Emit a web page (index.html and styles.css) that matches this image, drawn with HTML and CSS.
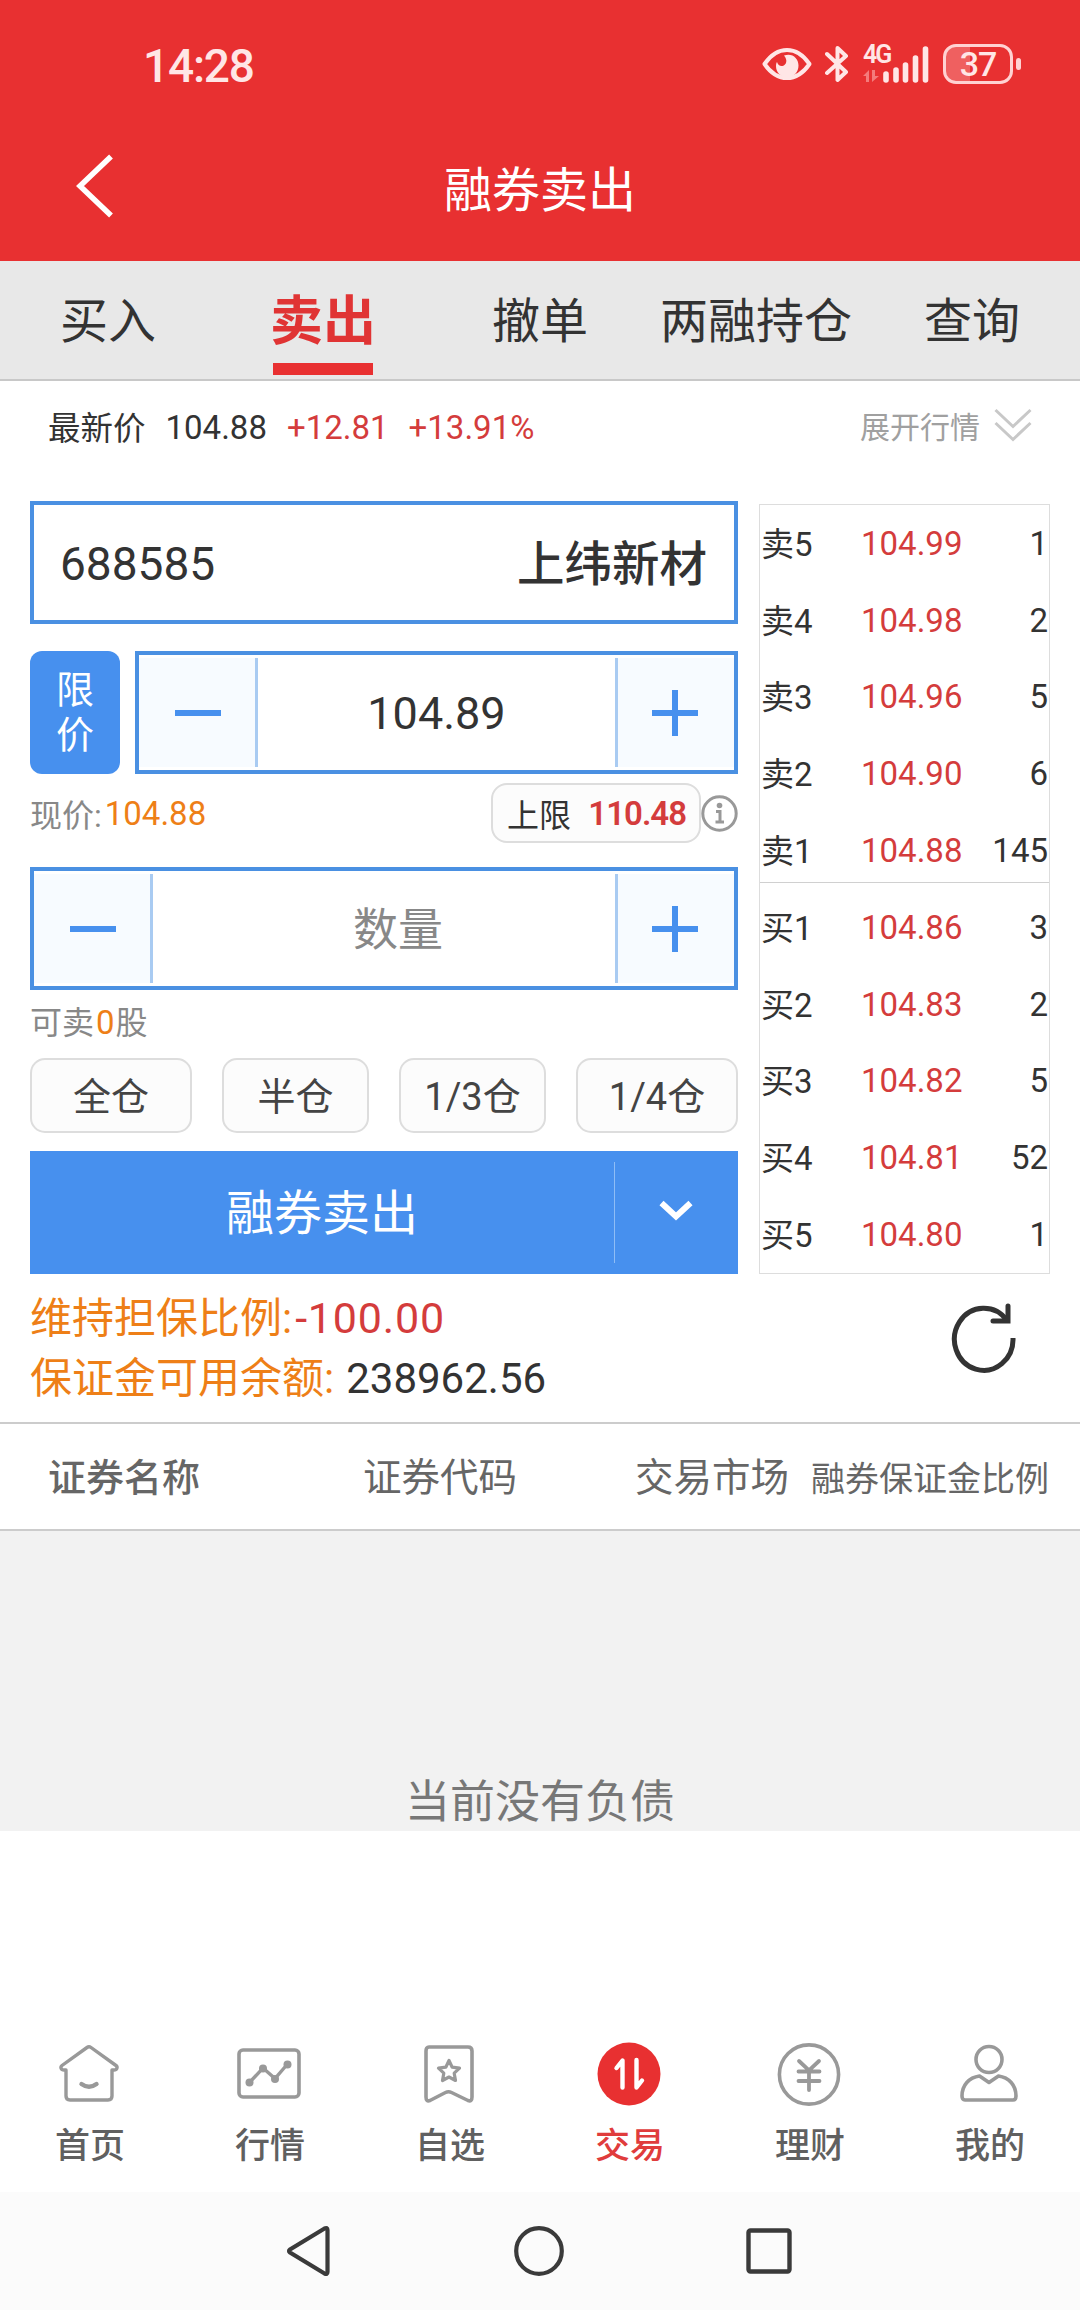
FILE: index.html
```html
<!DOCTYPE html>
<html lang="zh-CN">
<head>
  <meta charset="UTF-8">
  <title>融券卖出</title>
  <meta name="viewport" content="width=device-width, initial-scale=1.0">
  <link rel="stylesheet" href="styles.css">
</head>
<body>
  <div class="app">
    <!-- Status bar + title -->
    <header class="header">
      <div class="status-bar">
        <span class="status-time">14:28</span>
        <div class="status-icons">
          <svg class="icon-eye" width="50" height="34" viewBox="0 0 50 34">
            <path d="M2.500 17C9 7.500 16 3 25 3s16 4.500 22.500 14C41 26.500 34 31 25 31S9 26.500 2.500 17z" fill="none" stroke="#ffe6e6" stroke-width="4" stroke-linejoin="round"/>
            <path d="M22 8.500c8-3 14.500 2.500 14.500 10 0 7-5 11.500-11.500 11.500-7 0-11-5-11-11 0-1.500.3-3 1-4 1 3 3 4.500 5.500 4 4-1 5.500-6 1.500-10.500z" fill="#ffe6e6"/>
          </svg>
          <svg class="icon-bt" width="24" height="38" viewBox="0 0 24 38">
            <path d="M2 9l19 18-8.500 8V3L21 11 2 28" fill="none" stroke="#ffe6e6" stroke-width="4" stroke-linejoin="round" stroke-linecap="round"/>
          </svg>
          <div class="signal">
            <span class="signal-type">4G</span>
            <svg width="68" height="38" viewBox="0 0 68 38">
              <path d="M0 31l6-6v12H3v-6zM9 25h3v6h4l-7 6z" fill="#f47b7b"/>
              <path d="M23 29v6M33 25v10M42.500 20v15M52.500 13v22M62.500 4v31" stroke="#ffe6e6" stroke-width="5.600" stroke-linecap="round"/>
            </svg>
          </div>
          <div class="battery"><span>37</span></div>
        </div>
      </div>
      <div class="title-bar">
        <svg class="back" width="38" height="66" viewBox="0 0 38 66">
          <path d="M35 2.500L4 32l31 29.500" fill="none" stroke="#fff" stroke-width="5.500"/>
        </svg>
        <h1>融券卖出</h1>
      </div>
    </header>

    <nav class="tabs">
      <a class="tab">买入</a>
      <a class="tab active">卖出</a>
      <a class="tab">撤单</a>
      <a class="tab">两融持仓</a>
      <a class="tab">查询</a>
    </nav>

    <div class="quote">
      <span class="quote-label">最新价</span>
      <span class="num">104.88</span>
      <span class="num red">+12.81</span>
      <span class="num red">+13.91%</span>
      <span class="expand">展开行情
        <svg width="38" height="34" viewBox="0 0 38 34">
          <path d="M1.500 2L19 18.500 36.500 2M1.500 15L19 31.500 36.500 15" fill="none" stroke="#c8c8c8" stroke-width="3"/>
        </svg>
      </span>
    </div>

    <!-- Order form on the left, five level book on the right -->
    <div class="trade">
      <div class="form">
        <div class="stock-box">
          <span class="stock-code">688585</span>
          <span class="stock-name">上纬新材</span>
        </div>

        <div class="price-row">
          <button class="price-type">限<br>价</button>
          <div class="stepper">
            <button class="step minus"></button>
            <div class="step-value num">104.89</div>
            <button class="step plus"></button>
          </div>
        </div>

        <div class="price-hint">
          <span class="grey">现价:</span><span class="num orange">104.88</span>
          <div class="limit">上限 <b class="num">110.48</b></div>
          <svg width="37" height="37" viewBox="0 0 37 37">
            <circle cx="18.500" cy="18.500" r="16.700" fill="none" stroke="#999" stroke-width="3"/>
            <circle cx="18.500" cy="10.500" r="2.800" fill="#999"/>
            <path d="M15 16.500h4v10M14.500 27h8.500" fill="none" stroke="#999" stroke-width="3"/>
          </svg>
        </div>

        <div class="stepper">
          <button class="step minus"></button>
          <div class="step-value placeholder">数量</div>
          <button class="step plus"></button>
        </div>

        <div class="avail">可卖<span class="orange num">0</span>股</div>

        <div class="portions">
          <button class="wide">全仓</button>
          <button>半仓</button>
          <button>1/3仓</button>
          <button class="wide">1/4仓</button>
        </div>

        <div class="submit">
          <button class="submit-main">融券卖出</button>
          <button class="submit-more">
            <svg width="36" height="22" viewBox="0 0 36 22">
              <path d="M3.500 3L18 16.500 32.500 3" fill="none" stroke="#fff" stroke-width="6"/>
            </svg>
          </button>
        </div>
      </div>

      <div class="book">
        <div class="book-side sell">
          <div class="level"><span>卖5</span><span class="red">104.99</span><span>1</span></div>
          <div class="level"><span>卖4</span><span class="red">104.98</span><span>2</span></div>
          <div class="level"><span>卖3</span><span class="red">104.96</span><span>5</span></div>
          <div class="level"><span>卖2</span><span class="red">104.90</span><span>6</span></div>
          <div class="level"><span>卖1</span><span class="red">104.88</span><span>145</span></div>
        </div>
        <div class="book-side">
          <div class="level"><span>买1</span><span class="red">104.86</span><span>3</span></div>
          <div class="level"><span>买2</span><span class="red">104.83</span><span>2</span></div>
          <div class="level"><span>买3</span><span class="red">104.82</span><span>5</span></div>
          <div class="level"><span>买4</span><span class="red">104.81</span><span>52</span></div>
          <div class="level"><span>买5</span><span class="red">104.80</span><span>1</span></div>
        </div>
      </div>
    </div>

    <div class="margin-info">
      <div>
        <p><span class="orange">维持担保比例:</span><span class="num ratio red">-100.00</span></p>
        <p><span class="orange">保证金可用余额:</span><span class="num balance">238962.56</span></p>
      </div>
      <svg class="refresh" width="66" height="70" viewBox="0 0 66 70">
        <path d="M56 17.500A29.300 31 0 1 0 62 35" fill="none" stroke="#333" stroke-width="5"/>
        <path d="M57 3v15H42" fill="none" stroke="#333" stroke-width="5" stroke-linecap="round"/>
      </svg>
    </div>

    <div class="list-head">
      <span class="medium">证券名称</span>
      <span>证券代码</span>
      <span>交易市场</span>
      <span class="small">融券保证金比例</span>
    </div>
    <div class="empty">当前没有负债</div>

    <!-- Bottom tab bar -->
    <nav class="bottom-nav">
      <a>
        <svg width="64" height="64" viewBox="0 0 64 64">
          <path d="M9 28H7c-3 0-4-3-2-4.500L30 5.500q2-1.500 4 0l25 18c2 1.500 1 4.500-2 4.500h-2v26q0 4-4 4H13q-4 0-4-4z" fill="none" stroke="#999" stroke-width="3.400" stroke-linejoin="round"/>
          <path d="M24.500 42q7.500 5.500 15 0" fill="none" stroke="#999" stroke-width="4.400" stroke-linecap="round"/>
        </svg>
        首页
      </a>
      <a>
        <svg width="64" height="64" viewBox="0 0 64 64">
          <rect x="2" y="8" width="60" height="47" rx="4" fill="none" stroke="#999" stroke-width="3.600"/>
          <path d="M12.500 40.500L26 26l12 10.500L50.500 22" fill="none" stroke="#999" stroke-width="3.400"/>
          <circle cx="12.500" cy="40.500" r="4" fill="#999"/><circle cx="26" cy="26.500" r="4" fill="#999"/>
          <circle cx="38" cy="37" r="4" fill="#999"/><circle cx="50.500" cy="22.500" r="4" fill="#999"/>
        </svg>
        行情
      </a>
      <a>
        <svg width="64" height="64" viewBox="0 0 64 64">
          <path d="M12 5h39q4 0 4 4v46q0 5-4 3.500L34.500 50.500q-3-1.500-6 0L13 58.500Q9 60 9 55V9q0-4 3-4z" fill="none" stroke="#999" stroke-width="3.600" stroke-linejoin="round"/>
          <path d="M32 18.500l3.200 6.700 7.300 1-5.300 5 1.300 7.300L32 35l-6.500 3.500 1.300-7.300-5.300-5 7.300-1z" fill="none" stroke="#999" stroke-width="3.200" stroke-linejoin="round"/>
        </svg>
        自选
      </a>
      <a class="active">
        <svg width="64" height="64" viewBox="0 0 64 64">
          <circle cx="32" cy="32" r="31.500" fill="#e83031"/>
          <path d="M19.500 26l6-7.500v27M39.500 18v27.500l5.500-7" fill="none" stroke="#fff" stroke-width="4.400" stroke-linejoin="round" stroke-linecap="round"/>
        </svg>
        交易
      </a>
      <a>
        <svg width="64" height="64" viewBox="0 0 64 64">
          <circle cx="32" cy="32.500" r="29.600" fill="none" stroke="#999" stroke-width="3.600"/>
          <path d="M22 19l10 9.500L42 19M21.500 29.500h21M21.500 39h21M32 29v19" fill="none" stroke="#999" stroke-width="3.800" stroke-linecap="round"/>
        </svg>
        理财
      </a>
      <a>
        <svg width="64" height="64" viewBox="0 0 64 64">
          <circle cx="32" cy="17.500" r="13" fill="none" stroke="#999" stroke-width="3.600"/>
          <path d="M22.500 34l9.500 6.500 9.500-6.500C52 35.500 59 43 59 54q0 4-3 4H8q-3 0-3-4c0-11 7-18.500 17.500-20z" fill="none" stroke="#999" stroke-width="3.600" stroke-linejoin="round"/>
        </svg>
        我的
      </a>
    </nav>

    <footer class="sys-nav">
      <svg width="46" height="52" viewBox="0 0 46 52">
        <path d="M4 24.500q-2 1.500 0 3L38.500 48.500q3 1.500 3-1.500V5q0-3-3-1.500z" fill="none" stroke="#3a3a3a" stroke-width="4.200"/>
      </svg>
      <svg width="50" height="50" viewBox="0 0 50 50">
        <circle cx="25" cy="25" r="22.800" fill="none" stroke="#3a3a3a" stroke-width="4.200"/>
      </svg>
      <svg width="46" height="46" viewBox="0 0 46 46">
        <rect x="2.500" y="2.500" width="41" height="41" rx="2" fill="none" stroke="#3a3a3a" stroke-width="4.400"/>
      </svg>
    </footer>
  </div>
</body>
</html>
```
FILE: styles.css
```css
* {
  box-sizing: border-box;
}
body {
  margin: 0;
  background: #fff;
  color: #333;
  font-family: Roboto, 'Noto Sans CJK SC', sans-serif;
  font-size: 32px;
}
button {
  margin: 0;
  padding: 0;
  border: none;
  font-family: inherit;
  color: inherit;
}
svg {
  display: block;
  flex: none;
}
.app {
  width: 1080px;
  height: 2310px;
  display: flex;
  flex-direction: column;
  overflow: hidden;
}
.red {
  color: #d43c3c;
}
.orange {
  color: #ee7f17;
}
.grey {
  color: #888;
}

/* Header */
.header {
  height: 261px;
  background: #e83031;
  color: #fff;
}
.status-bar {
  height: 128px;
  padding: 0 59px 0 143px;
  display: flex;
  align-items: center;
  justify-content: space-between;
}
.status-time {
  color: #ffe6e6;
  font-size: 46px;
  font-weight: 500;
  letter-spacing: -1.2px;
  padding-top: 4px;
}
.status-icons {
  display: flex;
  align-items: center;
}
.icon-bt {
  margin-left: 13px;
}
.signal {
  position: relative;
  margin-left: 14px;
}
.signal-type {
  position: absolute;
  top: -2px;
  left: 0;
  color: #ffe6e6;
  font-size: 25px;
  line-height: 24px;
  font-weight: 600;
  letter-spacing: -2px;
}
.battery {
  position: relative;
  width: 70px;
  height: 40px;
  margin-left: 12px;
  margin-right: 8px;
  border: 3px solid #ffd2d2;
  border-radius: 13px;
  background: linear-gradient(90deg, #ef6060 38%, transparent 38%);
  color: #ffe6e6;
  font-size: 34px;
  line-height: 35px;
  font-weight: 500;
  text-align: center;
  letter-spacing: -1px;
}
.battery::after {
  content: "";
  position: absolute;
  top: 11px;
  right: -11px;
  width: 5px;
  height: 12px;
  border-radius: 3px;
  background: #ffd2d2;
}
.title-bar {
  display: flex;
  align-items: center;
  height: 118px;
  padding-left: 76px;
}
.title-bar h1 {
  flex: 1;
  margin: 7px 114px 0 0;
  font-size: 48px;
  line-height: 60px;
  font-weight: 400;
  text-align: center;
}

/* Tabs */
.tabs {
  display: flex;
  height: 120px;
  background: #e8e8e8;
  border-bottom: 2px solid #c8c8c8;
}
.tab {
  flex: 1;
  height: 114px;
  font-size: 48px;
  line-height: 122px;
  text-align: center;
  white-space: nowrap;
}
.tab.active {
  display: flex;
  justify-content: center;
  flex: none;
  width: 100px;
  margin: 0 59px 0 57px;
  font-size: 53px;
  font-weight: 700;
  color: #e03434;
  border-bottom: 12px solid #e83031;
}

.quote {
  display: flex;
  align-items: center;
  height: 93px;
  padding: 0 48px;
  font-size: 32.5px;
}
.quote-label {
  padding-bottom: 4px;
}
.quote .num {
  font-size: 33px;
  margin-left: 20px;
}
.expand {
  display: flex;
  align-items: center;
  gap: 14px;
  margin-left: auto;
  padding-bottom: 6px;
  font-size: 30px;
  color: #a0a0a0;
}

/* Order form */
.trade {
  display: flex;
  gap: 21px;
  padding: 27px 30px 0;
}
.form {
  width: 708px;
}
.stock-box {
  display: flex;
  align-items: center;
  justify-content: space-between;
  height: 123px;
  padding: 0 27px 0 26px;
  border: 4px solid #4a90e2;
}
.stock-code {
  padding-top: 3px;
  font-size: 46px;
}
.stock-name {
  padding-bottom: 5px;
  font-size: 47.5px;
  font-weight: 500;
}
.price-row {
  display: flex;
  gap: 15px;
  margin-top: 27px;
}
.price-type {
  width: 90px;
  height: 123px;
  border-radius: 12px;
  background: #4790ee;
  color: #fff;
  font-size: 38px;
  line-height: 45px;
}
.stepper {
  display: flex;
  flex: 1;
  height: 123px;
  padding: 3px 0;
  border: 4px solid #4a90e2;
}
.step {
  position: relative;
  width: 119px;
  background: #f7fbff;
}
.step.minus {
  border-right: 3px solid #a9cbf2;
}
.step.plus {
  border-left: 3px solid #a9cbf2;
}
.step::before,
.step.plus::after {
  content: "";
  position: absolute;
  left: 50%;
  top: 50%;
  width: 46px;
  height: 6px;
  margin: -3px 0 0 -22px;
  background: #4790ee;
}
.step.plus::before {
  margin-left: -24px;
}
.step.plus::after {
  width: 6px;
  height: 46px;
  margin: -23px 0 0 -4px;
}
.step-value {
  flex: 1;
  font-size: 45px;
  line-height: 112px;
  text-align: center;
}
.placeholder {
  color: #888;
  padding-left: 28px;
  line-height: 114px;
}
.price-hint {
  display: flex;
  align-items: center;
  height: 93px;
  padding-bottom: 15px;
}
.price-hint .num,
.avail .num {
  font-size: 33px;
}
.price-hint .orange {
  margin-left: 3px;
}
.limit {
  display: flex;
  align-items: center;
  justify-content: space-between;
  width: 210px;
  height: 60px;
  margin-left: auto;
  padding: 0 13px 0 14px;
  border: 2px solid #ddd;
  border-radius: 16px;
  background: #fcfcfc;
}
.limit .num {
  font-weight: 600;
  letter-spacing: -1px;
  color: #d43c3c;
}
.avail {
  height: 68px;
  line-height: 65px;
  color: #888;
}
.avail .num {
  margin: 0 1px 0 2px;
  color: #ee7f17;
}
.portions {
  display: flex;
  justify-content: space-between;
}
.portions button {
  width: 147px;
  height: 75px;
  padding-bottom: 4px;
  border: 2px solid #ddd;
  border-radius: 15px;
  background: #fcfcfc;
  color: #444;
  font-size: 38px;
}
.portions .wide {
  width: 162px;
}
.submit {
  display: flex;
  align-items: center;
  height: 123px;
  margin-top: 18px;
  background: #4790ee;
  color: #fff;
}
.submit button {
  height: 101px;
  background: none;
}
.submit .submit-main {
  flex: 1;
  padding-bottom: 7px;
  font-size: 48px;
}
.submit .submit-more {
  display: flex;
  align-items: center;
  justify-content: center;
  width: 124px;
  padding: 0 2px 3px 0;
  border-left: 1px solid #8fbdf6;
}

/* Five level book */
.book {
  width: 291px;
  height: 770px;
  margin-top: 3px;
  border: 1px solid #ddd;
  display: flex;
  flex-direction: column;
}
.book-side {
  position: relative;
  flex: 1;
  display: flex;
  flex-direction: column;
}
.sell::after {
  content: "";
  position: absolute;
  left: 0;
  right: 0;
  bottom: 6px;
  border-bottom: 1px solid #d0d0d0;
}
.level {
  flex: 1;
  display: grid;
  grid-template-columns: 100px 110px 1fr;
  align-items: center;
  padding: 0 1px;
  font-size: 33px;
}
.level span:first-child {
  padding-bottom: 3px;
}
.level span:last-child {
  text-align: right;
}

.margin-info {
  display: flex;
  justify-content: space-between;
  height: 150px;
  padding: 14px 63px 0 30px;
  border-bottom: 2px solid #ccc;
}
.margin-info p {
  margin: 0;
  font-size: 42px;
  line-height: 60px;
}
.margin-info .ratio {
  margin-left: 3px;
  font-size: 43px;
  letter-spacing: .8px;
}
.margin-info .balance {
  margin-left: 12px;
}
.refresh {
  margin-top: 15px;
}

/* Holdings */
.list-head {
  display: grid;
  grid-template-columns: 315px 272px 176px 1fr;
  align-items: center;
  height: 107px;
  padding: 0 0 5px 48px;
  border-bottom: 2px solid #ccc;
  color: #666;
  font-size: 38.500px;
  white-space: nowrap;
}
.list-head .medium {
  font-weight: 500;
  font-size: 38px;
}
.list-head .small {
  padding-top: 4px;
  font-size: 34px;
}
.empty {
  height: 300px;
  padding-top: 242px;
  background: #f2f2f2;
  color: #777;
  font-size: 45px;
  line-height: 60px;
  text-align: center;
}

/* Bottom bars */
.bottom-nav {
  display: flex;
  margin-top: auto;
  height: 150px;
  background: #fff;
}
.bottom-nav a {
  flex: 1;
  display: flex;
  flex-direction: column;
  align-items: center;
  font-size: 35px;
  line-height: 42px;
  font-weight: 500;
  color: #606060;
}
.bottom-nav svg {
  margin: 0 2px 20px 0;
}
.bottom-nav .active {
  color: #e03c3c;
}
.sys-nav {
  display: flex;
  align-items: center;
  justify-content: space-between;
  height: 118px;
  padding: 0 288px 0 286px;
  background: #fbfbfb;
}
```
